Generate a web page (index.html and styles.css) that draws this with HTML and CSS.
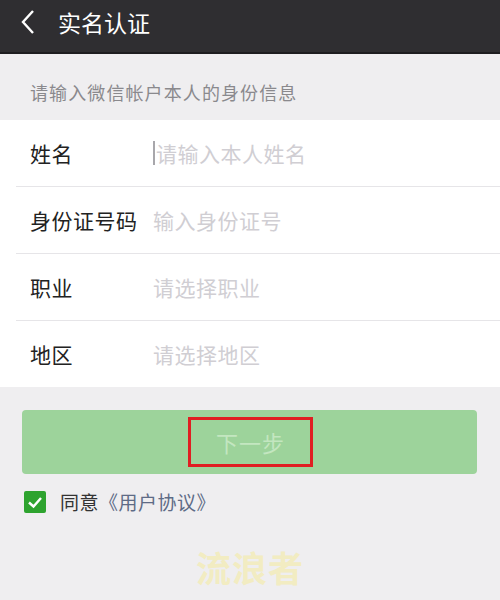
FILE: index.html
```html
<!DOCTYPE html>
<html lang="zh-CN">
<head>
    <meta charset="UTF-8">
    <meta name="viewport" content="width=device-width, initial-scale=1.0">
    <title>实名认证</title>
    <link rel="stylesheet" href="styles.css">
</head>
<body>

    <!-- Barra superior -->
    <div class="top-bar">
        <span class="back">
            <svg width="16" height="26" viewBox="0 0 16 26"><path d="M13 2 L3 13 L13 24" fill="none" stroke="#fff" stroke-width="2.4"/></svg>
        </span>
        <span class="title">实名认证</span>
    </div>

    <div class="hint">请输入微信帐户本人的身份信息</div>

    <!-- Formulario -->
    <div class="form">
        <div class="row">
            <span class="label">姓名</span>
            <span class="field"><i class="caret"></i>请输入本人姓名</span>
        </div>
        <div class="row">
            <span class="label">身份证号码</span>
            <span class="field">输入身份证号</span>
        </div>
        <div class="row">
            <span class="label">职业</span>
            <span class="field">请选择职业</span>
        </div>
        <div class="row">
            <span class="label">地区</span>
            <span class="field">请选择地区</span>
        </div>
    </div>

    <div class="actions">
        <div class="next-btn"><span class="mark">下一步</span></div>
        <div class="agree">
            <span class="check">
                <svg width="22" height="22" viewBox="0 0 22 22"><path d="M5 11.5 L9.5 15.5 L17 7" fill="none" stroke="#fff" stroke-width="2.4"/></svg>
            </span>
            同意<span class="link">《用户协议》</span>
        </div>
    </div>

    <div class="watermark">流浪者</div>

</body>
</html>
```

FILE: styles.css
```css
body {
    margin: 0;
    padding: 0;
    font-family: "Noto Sans CJK SC", "Noto Sans", sans-serif;
    background: #efeef0;
    width: 500px;
    height: 600px;
    overflow: hidden;
}
/* barra superior */
.top-bar {
    height: 54px;
    background: #2f2e31;
    border-bottom: 2px solid #1e1d20;
    display: flex;
    align-items: center;
    color: #fff;
    box-sizing: border-box;
}
.back {
    width: 16px;
    height: 26px;
    margin-left: 20px;
    margin-right: 22px;
    margin-top: -8px;
}
.title {
    font-size: 23px;
    margin-top: -8px;
}
.hint {
    height: 66px;
    line-height: 76px;
    padding-left: 30px;
    font-size: 18px;
    letter-spacing: 1.1px;
    color: #8a898d;
}
/* formulario */
.form {
    background: #fff;
    padding-left: 16px;
}
.row {
    height: 66px;
    display: flex;
    align-items: center;
    border-bottom: 1px solid #e6e5e8;
    font-size: 21px;
    letter-spacing: 0.5px;
}
.row:last-child {
    border-bottom: none;
}
.label {
    width: 123px;
    padding-left: 14px;
    color: #222;
    white-space: nowrap;
}
.field {
    color: #d0ced3;
    display: flex;
    align-items: center;
}
.caret {
    display: inline-block;
    width: 2px;
    height: 24px;
    background: #a8a7ab;
    margin-right: 1px;
}
/* boton y acuerdo */
.actions {
    padding: 23px 23px 0 22px;
}
.next-btn {
    height: 64px;
    background: #9dd39b;
    border-radius: 4px;
    display: flex;
    justify-content: center;
    align-items: center;
}
.mark {
    width: 119px;
    height: 44px;
    border: 3px solid #e01e22;
    color: #c3e6c0;
    font-size: 22px;
    letter-spacing: 1px;
    display: flex;
    justify-content: center;
    align-items: center;
    margin-left: 2px;
}
.agree {
    display: flex;
    align-items: center;
    margin-top: 14px;
    font-size: 19px;
    letter-spacing: 0.5px;
    color: #333;
}
.check {
    width: 22px;
    height: 22px;
    background: #2ea32f;
    border-radius: 2px;
    margin-left: 2px;
    margin-right: 14px;
}
.link {
    color: #5e6b86;
}
.watermark {
    text-align: center;
    margin-top: 26px;
    font-size: 35px;
    font-weight: bold;
    color: #f2ecc2;
    letter-spacing: 1px;
}
```
